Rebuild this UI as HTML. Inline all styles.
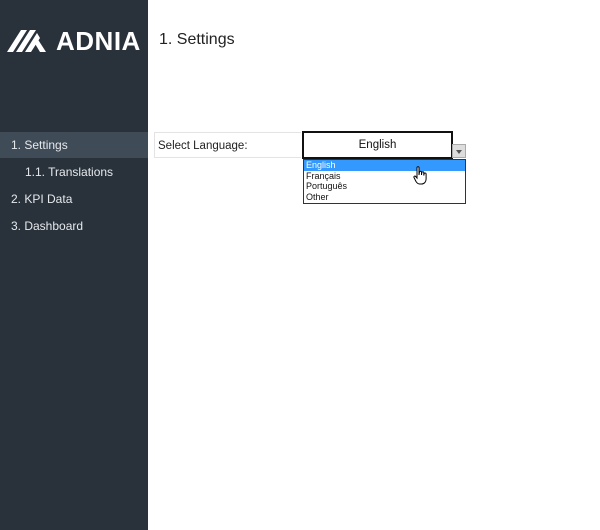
<!DOCTYPE html>
<html><head><style>
body{margin:0;width:600px;height:530px;background:#fff;font-family:"Liberation Sans",sans-serif;position:relative;overflow:hidden}
.sb{position:absolute;left:0;top:0;width:148px;height:530px;background:#29323b}
.logo{position:absolute;left:56px;top:26px;color:#fff;font-family:"Liberation Sans",sans-serif;font-size:26px;font-weight:bold;letter-spacing:0.5px}
.nav{position:absolute;left:0;width:148px;height:26px;line-height:27px;color:#e6e9ec;font-size:12px}
.act{background:#3f4b57}
.t{position:absolute;left:159px;top:31px;font-size:16px;color:#222}
.lab{position:absolute;left:154px;top:132px;width:147px;height:26px;border:1px solid #e3e3e3;border-right:none;font-size:11.5px;line-height:26px;padding-left:3px;box-sizing:border-box;color:#222}
.sel{position:absolute;left:302px;top:131px;width:151px;height:28px;border:2px solid #111;box-sizing:border-box;text-align:center;line-height:25px;font-size:11.5px;color:#111}
.arr{position:absolute;left:452px;top:144px;width:14px;height:14px;background:#ddd;border:1px solid #aaa;box-sizing:border-box}
.arr:after{content:"";position:absolute;left:3px;top:5px;border:3px solid transparent;border-top:4px solid #555}
.dd{position:absolute;left:303px;top:159px;width:163px;height:45px;border:1px solid #333;box-sizing:border-box;font-family:"Liberation Sans",sans-serif;font-size:9px;line-height:10.7px}
.dd div{padding-left:2px;color:#111}
.dd .h{background:#3399ff;color:#fff}
</style></head><body>
<div class="sb">
<svg style="position:absolute;left:7px;top:28px" width="42" height="24" viewBox="0 0 42 24"><g fill="#fff"><polygon points="0,24 6,24 20,2 14,2"/><polygon points="9,24 15,24 29,2 23,2"/><polygon points="18,24 24,24 33,10 30,5"/><polygon points="27,14 33,24 39,24 30,10"/></g></svg>
<div class="logo">ADNIA</div>
<div class="nav act" style="top:132px;padding-left:11px;box-sizing:border-box">1. Settings</div>
<div class="nav" style="top:159px;padding-left:25px;box-sizing:border-box">1.1. Translations</div>
<div class="nav" style="top:186px;padding-left:11px;box-sizing:border-box">2. KPI Data</div>
<div class="nav" style="top:213px;padding-left:11px;box-sizing:border-box">3. Dashboard</div>
</div>
<div class="t">1. Settings</div>
<div class="lab">Select Language:</div>
<div class="sel">English</div>
<div class="arr"></div>
<div class="dd"><div class="h">English</div><div>Français</div><div>Português</div><div>Other</div></div>
<svg style="position:absolute;left:413px;top:166px" width="16" height="20" viewBox="0 0 16 20"><path d="M4 1.5c0-1 2-1 2 0V9l.5-3c.3-1 2-1 2 0V9l.3-2.5c.3-1 2-1 2 0V9.5l.3-1.8c.3-1 2-.8 2 .2V13c0 3-2 5-4.5 5H6.5C5 18 4 17 3 15.5L1 11.5c-.5-1 .8-2 1.7-1L4 12z" fill="#fff" stroke="#000" stroke-width="1"/></svg>
</body></html>
